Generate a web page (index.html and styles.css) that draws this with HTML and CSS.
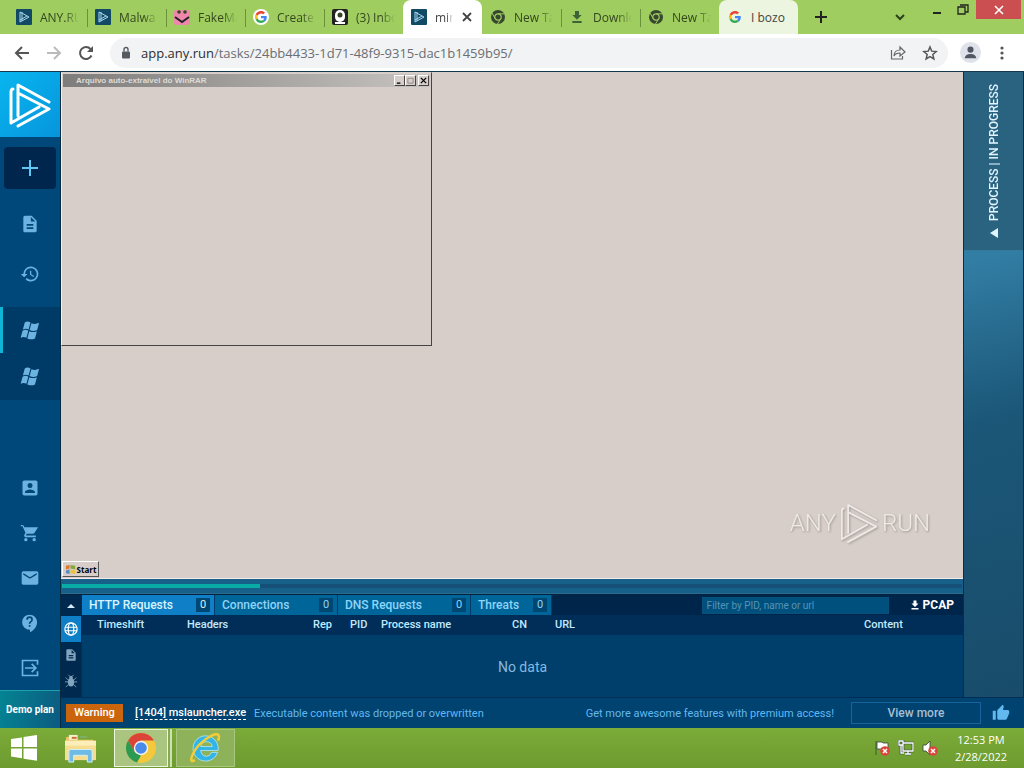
FILE: index.html
```html
<!DOCTYPE html>
<html lang="en">
<head>
<meta charset="utf-8">
<title>ANY.RUN task</title>
<link rel="stylesheet" href="styles.css">
</head>
<body>
<svg class="defs" aria-hidden="true">
  <symbol id="anyrun" viewBox="0 0 42 46"><g fill="none" stroke="currentColor" stroke-linecap="round" stroke-linejoin="round"><path d="M4 7Q2 7 2 10V41L30 25M9 34V3L40 20M9 11 40 27 9 44"/></g></symbol>
  <symbol id="fav" viewBox="0 0 16 16"><rect width="16" height="16" rx="1" fill="#124a66"/><path d="M4 3v10l9-5zM6 3v9M4 11l7-4" fill="none" stroke="#a8d8ee" stroke-width="1"/></symbol>
  <symbol id="google" viewBox="0 0 48 48"><path fill="#ea4335" d="M24 9.500c3.540 0 6.710 1.220 9.210 3.600l6.850-6.850C35.900 2.380 30.470 0 24 0 14.620 0 6.510 5.380 2.560 13.220l7.980 6.190C12.430 13.720 17.740 9.500 24 9.500z"/><path fill="#4285f4" d="M46.980 24.550c0-1.570-.15-3.090-.38-4.550H24v9.020h12.940c-.58 2.960-2.260 5.480-4.780 7.180l7.730 6c4.510-4.180 7.090-10.360 7.090-17.650z"/><path fill="#fbbc05" d="M10.530 28.590A14.500 14.500 0 0 1 9.770 24c0-1.600.27-3.140.76-4.590l-7.980-6.190A24 24 0 0 0 0 24c0 3.880.92 7.540 2.560 10.780z"/><path fill="#34a853" d="M24 48c6.480 0 11.930-2.130 15.890-5.810l-7.730-6c-2.150 1.450-4.920 2.300-8.160 2.300-6.260 0-11.570-4.220-13.470-9.910l-7.980 6.190C6.510 42.620 14.620 48 24 48z"/></symbol>
  <symbol id="chromegrey" viewBox="0 0 16 16"><circle cx="8" cy="8" r="7" fill="#37472f"/><circle cx="8" cy="8" r="3.200" fill="none" stroke="#9fcd5f" stroke-width="1.200"/><path d="M8 4.800h6.500M5.200 9.600 2 4M10.800 9.600 7.500 15" stroke="#9fcd5f" stroke-width="1"/></symbol>
  <symbol id="download" viewBox="0 0 24 24"><path d="M19 9h-4V3H9v6H5l7 7zM5 18v3h14v-3z"/></symbol>
  <symbol id="doc" viewBox="0 0 24 24"><path d="M14 2H6a2 2 0 0 0-2 2v16c0 1.100.9 2 2 2h12a2 2 0 0 0 2-2V8zm2 16H8v-2h8zm0-4H8v-2h8zm-3-5V3.500L18.500 9z"/></symbol>
  <symbol id="history" viewBox="0 0 24 24"><path d="M13 3a9 9 0 0 0-9 9H1l3.900 3.900.1.100L9 12H6a7 7 0 1 1 2.060 4.940l-1.420 1.420A9 9 0 1 0 13 3zm-1 5v5l4.280 2.540.72-1.210-3.500-2.080V8z"/></symbol>
  <symbol id="win7" viewBox="0 0 22 22"><path d="M5 2.500C7 1.300 9 1.400 11 2.600L9 10C7 8.800 5 8.900 3 10zM12 3.300c2.500 1.300 5 1 8-.3L18 10.500c-2.500 1.200-5 1.400-8 .1zM2.700 11.200C5 10 6.700 10 8.700 11.200l-2 7.400C5 17.500 3 17.500.7 18.500zM9.700 11.800c2.600 1.200 5 1.200 8 0l-2 7.500c-2.600 1.300-5 1.300-8 0z"/></symbol>
  <symbol id="contact" viewBox="0 0 24 24"><path d="M3 5v14a2 2 0 0 0 2 2h14a2 2 0 0 0 2-2V5a2 2 0 0 0-2-2H5a2 2 0 0 0-2 2zm12 4a3 3 0 1 1-6 0 3 3 0 0 1 6 0zm-9 8c0-2 4-3.100 6-3.100s6 1.100 6 3.100v1H6z"/></symbol>
  <symbol id="cart" viewBox="0 0 24 24"><path d="M7 18a2 2 0 1 0 0 4 2 2 0 0 0 0-4zM1 2v2h2l3.600 7.590-1.350 2.450C4.520 15.370 5.480 17 7 17h12v-2H7.420c-.14 0-.25-.11-.25-.25l.9-1.750h7.450c.75 0 1.410-.41 1.750-1.030L21.700 5H5.210l-.94-2zm16 16a2 2 0 1 0 0 4 2 2 0 0 0 0-4z"/></symbol>
  <symbol id="mail" viewBox="0 0 24 24"><path d="M20 4H4a2 2 0 0 0-2 2v12c0 1.100.9 2 2 2h16a2 2 0 0 0 2-2V6a2 2 0 0 0-2-2zm0 4-8 5-8-5V6l8 5 8-5z"/></symbol>
  <symbol id="help" viewBox="0 0 24 24"><path d="M11.500 2a9 9 0 0 0 0 18h.5v3c4.900-2.300 8.500-7 8.500-12 0-5-4-9-9-9zm1 14.500h-2v-2h2zm0-3.500h-2c0-3.200 3-3 3-5a2 2 0 0 0-4 0h-2a4 4 0 0 1 8 0c0 2.500-3 2.700-3 5z"/></symbol>
  <symbol id="exit" viewBox="0 0 24 24"><path d="M21 8V3H3v18h18v-5M6 12h13M14 7l5 5-5 5" fill="none" stroke="currentColor" stroke-width="2"/></symbol>
  <symbol id="globe" viewBox="0 0 16 16"><g fill="none" stroke="currentColor" stroke-width="1.400"><circle cx="8" cy="8" r="7"/><ellipse cx="8" cy="8" rx="3.200" ry="7"/><path d="M1 6h14M1 10h14"/></g></symbol>
  <symbol id="bug" viewBox="0 0 16 16"><ellipse cx="8" cy="9.500" rx="3.600" ry="4.800"/><circle cx="8" cy="4" r="2"/><path d="M5 1l2 2M11 1 9 3M2 4l3 3M14 4l-3 3M1 9h14M2 15l3-3M14 15l-3-3" stroke="currentColor"/></symbol>
  <symbol id="cross" viewBox="0 0 10 10"><path d="M1 1l8 8M9 1 1 9" stroke="currentColor" stroke-width="1.800"/></symbol>
</svg>

<header>
  <div class="tabstrip">
    <nav class="tabs" aria-label="Browser tabs">
      <a class="tab" href="#"><svg><use href="#fav"/></svg><span>ANY.RU</span></a>
      <a class="tab" href="#"><svg><use href="#fav"/></svg><span>Malwa</span></a>
      <a class="tab" href="#"><svg viewBox="0 0 16 16"><rect y="1" width="16" height="15" rx="2" fill="#ef86ab"/><circle cx="5" cy="3" r="1.800"/><circle cx="11" cy="3" r="1.800"/><path d="M1 8l7 5 7-5" fill="none" stroke="#222" stroke-width="2"/></svg><span>FakeMa</span></a>
      <a class="tab" href="#"><svg viewBox="0 0 16 16"><circle cx="8" cy="8" r="8" fill="#fff"/><use href="#google" x="2" y="2" width="12" height="12"/></svg><span>Create</span></a>
      <a class="tab plain" href="#"><svg viewBox="0 0 16 16"><rect width="16" height="16" rx="2" fill="#222"/><rect x="3" y="1" width="10" height="12" rx="5" fill="#fff"/><circle cx="8" cy="6" r="2.500"/><path d="M3 13h10v2H3z" fill="#fff"/></svg><span>(3) Inbo</span></a>
      <a class="tab active" href="#" aria-current="page"><svg><use href="#fav"/></svg><span>min</span><b><svg class="close"><use href="#cross"/></svg></b></a>
      <a class="tab" href="#"><svg><use href="#chromegrey"/></svg><span>New Ta</span></a>
      <a class="tab" href="#"><svg fill="#3d6338"><use href="#download" fill="#3d6338"/></svg><span>Downlo</span></a>
      <a class="tab plain" href="#"><svg><use href="#chromegrey"/></svg><span>New Ta</span></a>
      <a class="tab hover" href="#"><svg viewBox="0 0 16 16"><use href="#google" x="2" y="2" width="12" height="12"/></svg><span>I bozo</span></a>
    </nav>
    <button class="newtab" aria-label="New tab"><svg viewBox="0 0 12 12"><path d="M6 0v12M0 6h12" stroke="#222" stroke-width="2"/></svg></button>
    <button class="search" aria-label="Search tabs"><svg viewBox="0 0 12 12"><path d="M2 4l4 4 4-4" fill="none" stroke="#2c3f1c" stroke-width="2"/></svg></button>
    <div class="wincontrols">
      <button aria-label="Minimize"><svg viewBox="0 0 12 12"><path d="M2 9h8" stroke="#222" stroke-width="2"/></svg></button>
      <button aria-label="Restore"><svg viewBox="0 0 12 12"><path d="M1 3h7v7H1zM3 1h8v7H8" fill="none" stroke="#222" stroke-width="1.300"/></svg></button>
      <button class="winclose" aria-label="Close"><svg viewBox="0 0 12 12"><path d="M2 2l8 8M10 2l-8 8" stroke="#fff" stroke-width="1.600"/></svg></button>
    </div>
  </div>
  <div class="toolbar">
    <button aria-label="Back"><svg viewBox="0 0 16 16"><path d="M15 8H2M8 2 2 8l6 6" fill="none" stroke="#555" stroke-width="2"/></svg></button>
    <button aria-label="Forward"><svg viewBox="0 0 16 16"><path d="M1 8h13M8 2l6 6-6 6" fill="none" stroke="#bbb" stroke-width="2"/></svg></button>
    <button aria-label="Reload"><svg viewBox="0 0 16 16"><path d="M13.500 10.500A6 6 0 1 1 12.500 4" fill="none" stroke="#555" stroke-width="2"/><path d="M15 1v6H9z" fill="#555"/></svg></button>
    <div class="omnibox">
      <svg class="lock" viewBox="0 0 10 12"><rect x="1" y="5" width="8" height="7" rx="1" fill="#555a60"/><path d="M3 5V3a2 2 0 0 1 4 0v2" fill="none" stroke="#555a60" stroke-width="1.400"/></svg>
      <a class="url" href="#"><span>app.any.run</span>/tasks/24bb4433-1d71-48f9-9315-dac1b1459b95/</a>
      <button aria-label="Share"><svg viewBox="0 0 16 16"><path d="M1.500 5v9h11v-3M4 11c0-4 3-6 6-6V2l5 5-5 4V8c-3 0-5 1-6 3z" fill="none" stroke="#666" stroke-width="1.200"/></svg></button>
      <button aria-label="Bookmark"><svg viewBox="0 0 24 24"><path d="M12 3l2.600 6.200 6.700.6-5.100 4.400 1.600 6.600-5.800-3.500-5.800 3.500 1.600-6.600L2.700 9.800l6.700-.6z" fill="none" stroke="#555" stroke-width="2.200"/></svg></button>
    </div>
    <div class="account">
      <button class="profile" aria-label="Profile"><svg viewBox="0 0 22 22"><circle cx="11" cy="11" r="11" fill="#dfe2ea"/><circle cx="11" cy="8" r="3.200" fill="#505763"/><path d="M5 17c0-6 12-6 12 0z" fill="#505763"/></svg></button>
      <button aria-label="Menu"><svg viewBox="0 0 16 16"><g fill="#555"><circle cx="8" cy="3" r="1.600"/><circle cx="8" cy="8" r="1.600"/><circle cx="8" cy="13" r="1.600"/></g></svg></button>
    </div>
  </div>
</header>

<div class="app">
  <aside class="sidebar">
    <a class="logo" href="#" aria-label="ANY.RUN"><svg stroke-width="3"><use href="#anyrun"/></svg></a>
    <button class="add" aria-label="New task"><svg viewBox="0 0 16 16"><path d="M8 0v16M0 8h16" stroke="#5ec8f5" stroke-width="2"/></svg></button>
    <nav class="side top" aria-label="Main">
      <a href="#" aria-label="Reports"><svg><use href="#doc"/></svg></a>
      <a href="#" aria-label="History"><svg><use href="#history"/></svg></a>
    </nav>
    <nav class="tasks" aria-label="Tasks">
      <a class="current" href="#" aria-label="Task 1"><svg><use href="#win7"/></svg></a>
      <a href="#" aria-label="Task 2"><svg><use href="#win7"/></svg></a>
    </nav>
    <nav class="side bottom" aria-label="Account">
      <a href="#" aria-label="Profile"><svg><use href="#contact"/></svg></a>
      <a href="#" aria-label="Pricing"><svg><use href="#cart"/></svg></a>
      <a href="#" aria-label="Contacts"><svg><use href="#mail"/></svg></a>
      <a href="#" aria-label="FAQ"><svg><use href="#help"/></svg></a>
      <a href="#" aria-label="Sign out"><svg><use href="#exit"/></svg></a>
    </nav>
    <a class="plan" href="#">Demo plan</a>
  </aside>

  <div class="content">
    <div class="columns">
      <main>
        <section class="desktop">
          <div class="window">
            <div class="titlebar"><span>Arquivo auto-extraível do WinRAR</span>
              <button aria-label="Minimize"><svg viewBox="0 0 8 8"><path d="M1 7h4" stroke="#000" stroke-width="1.500"/></svg></button><button aria-label="Maximize"><svg viewBox="0 0 8 8"><path d="M1 1.500h6V7H1z" fill="none" stroke="#888"/></svg></button><button class="x" aria-label="Close"><svg viewBox="0 0 8 8"><path d="M1 1l6 6M7 1 1 7" stroke="#000" stroke-width="1.500"/></svg></button>
            </div>
          </div>
          <div class="watermark"><span>ANY</span><svg stroke-width="2"><use href="#anyrun"/></svg><span>RUN</span></div>
          <button class="xpstart"><svg viewBox="0 0 12 12"><path d="M1 2l4-1v4L1 6z" fill="#e0772b"/><path d="M6 1l5 1v4L6 5z" fill="#86a83a"/><path d="M1 7l4-1v5L1 10z" fill="#558bc6"/><path d="M6 6l5 1v4l-5-1z" fill="#e9c23c"/></svg>Start</button>
        </section>
        <div class="progress"><div class="track"><div class="fill" style="width:22%"></div></div></div>
        <section class="network">
          <div class="rail">
            <button class="up" aria-label="Collapse"><svg viewBox="0 0 8 4"><path d="M4 0l4 4H0z"/></svg></button>
            <button class="on" aria-label="Network"><svg><use href="#globe"/></svg></button>
            <button aria-label="Files"><svg><use href="#doc"/></svg></button>
            <button aria-label="Debug"><svg><use href="#bug"/></svg></button>
          </div>
          <div class="panel">
            <div class="nettabs">
              <button class="wide2 sel">HTTP Requests<i>0</i></button>
              <button class="wide1">Connections<i>0</i></button>
              <button class="wide2">DNS Requests<i>0</i></button>
              <button class="wide0">Threats<i>0</i></button>
              <input type="text" aria-label="Filter" placeholder="Filter by PID, name or url">
              <a class="pcap" href="#"><svg><use href="#download"/></svg>PCAP</a>
            </div>
            <table>
              <colgroup><col class="c1"><col class="c2"><col class="c3"><col class="c4"><col class="c5"><col class="c6"><col><col class="c8"></colgroup>
              <thead><tr><th>Timeshift</th><th>Headers</th><th>Rep</th><th>PID</th><th>Process name</th><th>CN</th><th>URL</th><th>Content</th></tr></thead>
              <tbody><tr><td colspan="8">No data</td></tr></tbody>
            </table>
          </div>
        </section>
      </main>
      <aside class="process">
        <button><span>PROCESS | IN PROGRESS</span><svg viewBox="0 0 8 10"><path d="M8 0v10L0 5z"/></svg></button>
      </aside>
    </div>
    <footer class="notice">
      <strong class="warn">Warning</strong>
      <a class="proc" href="#">[1404] mslauncher.exe</a>
      <span class="event">Executable content was dropped or overwritten</span>
      <span class="promo">Get more awesome features with premium access!</span>
      <button class="view">View more</button>
      <button class="like" aria-label="Like"><svg viewBox="0 0 24 24"><path d="M1 21h4V9H1zm22-11a2 2 0 0 0-2-2h-6.300l.9-4.600v-.3c0-.4-.2-.8-.4-1.100L14.200 1 7.600 7.600C7.200 8 7 8.500 7 9v10c0 1.100.9 2 2 2h9c.8 0 1.500-.5 1.800-1.200l3-7.100c.1-.2.200-.5.200-.7z"/></svg></button>
    </footer>
  </div>
</div>

<footer class="taskbar">
  <button class="start" aria-label="Start"><svg viewBox="0 0 28 28"><path d="M1 5l11-1.600V13H1zM13.500 3 27 1v12H13.500zM1 14.500h11v9.700L1 22.600zM13.500 14.500H27v12.300l-13.500-2z" fill="#fff"/></svg></button>
  <button class="explorer" aria-label="File Explorer"><svg viewBox="0 0 34 32"><path d="M2 4h10l2 3h16v5H2z" fill="#e8c667"/><path d="M5 2h9v5H5z" fill="#f5f0d0"/><path d="M16 3h8v2h-8z" fill="#7dae6a"/><path d="M8 4h5v2H8z" fill="#cf6a3a"/><path d="M1 8h32v20H1z" fill="#f6dd8f"/><path d="M1 8h32v5H1z" fill="#fbeebb"/><path d="M5 30V19q0-2 2-2h20q2 0 2 2v11h-5v-7H10v7z" fill="#6ebbe6" stroke="#d5effa"/></svg></button>
  <button class="chrome" aria-label="Google Chrome"><svg viewBox="0 0 32 32"><circle cx="16" cy="16" r="15" fill="#f4c83c"/><path d="M3 8.500A15 15 0 0 1 29 8.500H16L9.500 20z" fill="#db4437"/><path d="M3 8.500 9.700 20 16 23.500l-4 7A15 15 0 0 1 3 8.500z" fill="#2c9a50"/><circle cx="16" cy="16" r="7.200" fill="#f4f4f4"/><circle cx="16" cy="16" r="5.800" fill="#4a8bea"/></svg></button>
  <button class="ie" aria-label="Internet Explorer"><svg viewBox="0 0 34 34"><path d="M29.500 21A13 13 0 1 1 30 15v4H12q1 6 6 6 4 0 5-4zM12 15h12q-1-5-6-5t-6 5z" fill="#31b4e8" stroke="#bceafa" stroke-width=".8"/><path d="M6 29C-2 34 4 18 14 10S34-2 30 9" fill="none" stroke="#f3cd39" stroke-width="2.500"/></svg></button>
  <div class="tray">
    <svg viewBox="0 0 16 16"><path d="M2 1v14M3 2h5l1 1h5v7H8L7 9H3z" fill="#fff" stroke="#344" stroke-width=".8"/><circle cx="11" cy="11" r="4.800" fill="#d9463b"/><path d="M9 9l4 4M13 9l-4 4" stroke="#fff" stroke-width="1.500"/></svg>
    <svg viewBox="0 0 16 16"><path d="M5 3h10v8H5zM7 14h6M10 11v3M1 1h4v4H1zM3 5v8h3" fill="none" stroke="#344" stroke-width="2.600"/><path d="M5 3h10v8H5zM7 14h6M10 11v3M1 1h4v4H1zM3 5v8h3" fill="none" stroke="#fff" stroke-width="1.300"/></svg>
    <svg viewBox="0 0 16 16"><path d="M1 5h3l4-4v14l-4-4H1z" fill="#fff" stroke="#344" stroke-width=".8"/><circle cx="11" cy="11" r="4.800" fill="#d9463b"/><path d="M9 9l4 4M13 9l-4 4" stroke="#fff" stroke-width="1.500"/></svg>
  </div>
  <time class="clock" datetime="2022-02-28T12:53"><span>12:53 PM</span><span>2/28/2022</span></time>
</footer>
</body>
</html>
```
FILE: styles.css
```css
* { box-sizing: border-box; }
body {
  margin: 0;
  min-height: 100vh;
  display: flex;
  flex-direction: column;
  font-family: Roboto, "Liberation Sans", sans-serif;
  background: #00477a;
}
button { border: 0; padding: 0; background: none; font: inherit; color: inherit; display: flex; align-items: center; justify-content: center; }
a { color: inherit; text-decoration: none; }
svg { display: block; flex: none; fill: currentColor; }
.defs { position: absolute; width: 0; height: 0; }

/* Browser frame */
.tabstrip { display: flex; height: 34px; background: #9fcd5f; padding-left: 8px; font: 12px "Open Sans", "Noto Sans", sans-serif; color: #35461f; }
.tabs { display: flex; }
.tab { display: flex; align-items: center; gap: 8px; width: 79px; padding: 0 6px 0 8px; position: relative; }
.tab svg { width: 16px; height: 16px; }
.tab span { flex: 1; min-width: 0; overflow: hidden; white-space: nowrap; mask-image: linear-gradient(90deg, #000 60%, transparent 95%); }
.tab::after { content: ""; position: absolute; right: -1px; top: 9px; height: 18px; width: 1px; background: #6b913a; }
.plain::after, .active::after, .hover::after { display: none; }
.active, .hover { background: #fff; border-radius: 8px 8px 0 0; color: #444; }
.hover { background: #ecf5df; }
.hover span { mask-image: none; }
.active b { padding-right: 4px; }
.tab .close { width: 10px; height: 10px; }
.newtab { width: 46px; }
.newtab svg, .search svg, .wincontrols svg { width: 12px; height: 12px; }
.search { margin-left: auto; width: 28px; }
.wincontrols { display: flex; align-items: flex-start; margin-left: 10px; padding-right: 3px; }
.wincontrols button { width: 26px; height: 19px; }
.wincontrols .winclose { width: 45px; background: #cb4f50; }
.toolbar { display: flex; align-items: center; height: 38px; padding: 0 14px; gap: 16px; background: #fff; border-bottom: 1px solid #16384c; }
.toolbar svg { width: 16px; height: 16px; }
.omnibox { flex: 1; display: flex; align-items: center; gap: 16px; height: 30px; border-radius: 15px; background: #f1f3f5; padding: 0 10px 0 11px; }
.omnibox .lock { width: 10px; height: 13px; margin-right: -6px; }
.url { flex: 1; font: 13px "Open Sans", "Noto Sans", sans-serif; color: #6b6e72; }
.url span { color: #2c2e31; }
.account { display: flex; align-items: center; gap: 13px; margin-left: -4px; }
.toolbar .profile svg { width: 21px; height: 21px; }

/* Application */
.app { flex: 1; display: flex; }
.sidebar { width: 61px; display: flex; flex-direction: column; background: #00477a; border-right: 1px solid #062a40; color: #6db3e2; }
.logo { display: flex; align-items: center; justify-content: center; height: 65px; background: linear-gradient(135deg, #08b5ee, #0795dd); color: #fff; }
.logo svg { width: 42px; height: 46px; }
.add { height: 42px; margin: 10px 4px; border-radius: 4px; background: #00264d; }
.add svg { width: 16px; height: 16px; }
.side { display: flex; flex-direction: column; }
.side a, .tasks a { display: flex; align-items: center; justify-content: center; }
.side svg { width: 20px; height: 20px; }
.top a { height: 50px; }
.tasks { margin-top: 8px; background: #003a66; }
.tasks a { height: 47px; }
.tasks svg { width: 21px; height: 21px; }
.tasks .current { height: 46px; border-left: 3px solid #0db6d6; padding-right: 3px; }
.bottom { margin-top: auto; }
.bottom a { height: 45px; }
.plan { display: flex; align-items: center; justify-content: center; height: 38px; background: linear-gradient(100deg, #048493, #0c5a80); border-top: 1px solid #1fa0ad; color: #fff; font-size: 10px; font-weight: 700; }
.content { flex: 1; min-width: 0; display: flex; flex-direction: column; }
.columns { flex: 1; display: flex; }
main { flex: 1; min-width: 0; display: flex; flex-direction: column; }

/* Remote desktop */
.desktop { flex: 1; position: relative; background: #d8cec9; border-bottom: 1px solid #f0ebe8; color: #000; }
.window { position: absolute; left: 0; top: 0; width: 371px; height: 274px; padding: 1px; border: 1px solid #444; border-top-color: #d8cec9; border-left-color: #f4efec; }
.titlebar { display: flex; align-items: center; height: 13px; padding: 0 1px 0 13px; background: linear-gradient(90deg, #7f7d7b, #c6c3c0); color: #dedbd8; font: 700 8px "Liberation Sans", sans-serif; }
.titlebar span { flex: 1; }
.titlebar button { width: 11px; height: 11px; background: #d8cec9; border: 1px solid; border-color: #fff #444 #444 #fff; }
.titlebar .x { margin-left: 2px; }
.titlebar svg { width: 7px; height: 7px; }
.watermark { position: absolute; right: 33px; bottom: 34px; display: flex; align-items: center; gap: 4px; color: #efeae7; font-size: 24px; font-weight: 300; filter: drop-shadow(1px 1px 1px #9c9692); }
.watermark svg { width: 38px; height: 42px; }
.xpstart { position: absolute; left: 1px; bottom: 1px; width: 37px; height: 16px; gap: 1px; border: 1px solid; border-color: #fff #555 #555 #fff; font: 700 8px "Open Sans", sans-serif; }
.xpstart svg { width: 11px; height: 11px; }
.progress { height: 15px; padding: 5px 1px; background: #17608a; border-bottom: 1px solid #2b6c8c; }
.track { background: #164f78; }
.fill { height: 4px; background: #08aba6; }

/* Network panel */
.network { display: flex; border-top: 1px solid #032340; background: #003f6c; }
.rail { width: 21px; display: flex; flex-direction: column; background: #00294f; border-right: 1px solid #00305a; color: #80a5bd; }
.rail button { height: 26px; }
.rail .up { height: 21px; color: #d5ecfa; }
.rail .on { background: #0e7fc6; color: #fff; }
.rail svg { width: 14px; height: 14px; }
.rail .up svg { width: 8px; height: 4px; }
.panel { flex: 1; min-width: 0; }
.nettabs { display: flex; align-items: center; height: 20px; background: #00254a; font-size: 12px; font-weight: 500; color: #8ed4fa; }
.nettabs button { height: 20px; justify-content: space-between; padding: 0 4px 0 7px; background: #006598; border-right: 1px solid #00396a; }
.nettabs .sel { background: #0f80c8; color: #d8f4ff; }
.wide2 { width: 133px; }
.wide1 { width: 123px; }
.wide0 { width: 81px; }
.nettabs i { width: 14px; line-height: 14px; text-align: center; font-style: normal; font-weight: 400; font-size: 11px; background: #004673; }
.nettabs input { margin-left: auto; width: 187px; height: 17px; border: 1px solid #07527c; background: #00507d; padding: 0 4px; font: 10px Roboto, sans-serif; color: #9ecbe6; }
.nettabs input::placeholder { color: #5594b8; opacity: 1; }
.pcap { display: flex; align-items: center; gap: 2px; margin: 0 9px 0 20px; color: #fff; font-weight: 700; }
.pcap svg { width: 12px; height: 12px; }
table { width: 100%; table-layout: fixed; border-collapse: collapse; }
th { height: 20px; padding: 0 0 2px 15px; text-align: left; font-size: 11px; font-weight: 500; color: #c2eaff; background: #002e58; white-space: nowrap; }
td { height: 62px; padding: 2px 0 0; text-align: center; font-size: 14px; color: #86b8df; }
.c1 { width: 90px; }
.c2 { width: 126px; }
.c3 { width: 37px; }
.c4 { width: 31px; }
.c5 { width: 131px; }
.c6 { width: 43px; }
.c8 { width: 114px; }

/* Process column */
.process { width: 61px; background: linear-gradient(165deg, #327da4 30%, #1b5778 55%, #194c6b); border: solid #073047; border-width: 0 1px; }
.process button { width: 100%; height: 179px; flex-direction: column; gap: 8px; background: #2a637f; border-bottom: 1px solid #35799b; color: #dff4ff; font-size: 12px; font-weight: 500; }
.process span { writing-mode: vertical-rl; transform: rotate(180deg); white-space: nowrap; }
.process svg { width: 8px; height: 10px; }

/* Notice bar */
.notice { display: flex; align-items: center; height: 31px; border-top: 1px solid #002e55; background: #004270; padding: 0 14px 0 5px; font-size: 11px; color: #62b9f0; }
.warn { width: 57px; line-height: 18px; text-align: center; background: #cb650d; color: #fff; font-weight: 500; }
.proc { margin: 0 8px 0 12px; color: #fff; font-weight: 500; border-bottom: 1px dashed #fff; }
.promo { margin-left: auto; }
.view { width: 130px; height: 22px; margin: 0 11px 0 17px; border: 1px solid #17639a; color: #a7bed3; font-size: 12px; font-weight: 500; }
.like svg { width: 18px; height: 18px; }

/* Taskbar */
.taskbar { display: flex; height: 40px; background: linear-gradient(#7bab38, #6d9b30); }
.start { width: 47px; }
.start svg { width: 28px; height: 28px; }
.explorer { width: 67px; }
.explorer svg { width: 33px; height: 31px; }
.chrome { width: 54px; margin: 1px 0; background: #a9c57f; border: 1px solid #edf4df; box-shadow: 2px 0 #86a957, 4px 0 #cfe0b4; }
.chrome svg { width: 32px; height: 32px; }
.ie { width: 59px; margin: 1px 0 1px 8px; background: #8eb25a; border: 1px solid #a9c681; }
.ie svg { width: 33px; height: 33px; }
.tray { display: flex; align-items: center; gap: 8px; margin-left: auto; }
.tray svg { width: 16px; height: 16px; }
.clock { width: 86px; display: flex; flex-direction: column; align-items: center; justify-content: center; font: 11px/17px "Open Sans", "Noto Sans", sans-serif; color: #fff; }
```
